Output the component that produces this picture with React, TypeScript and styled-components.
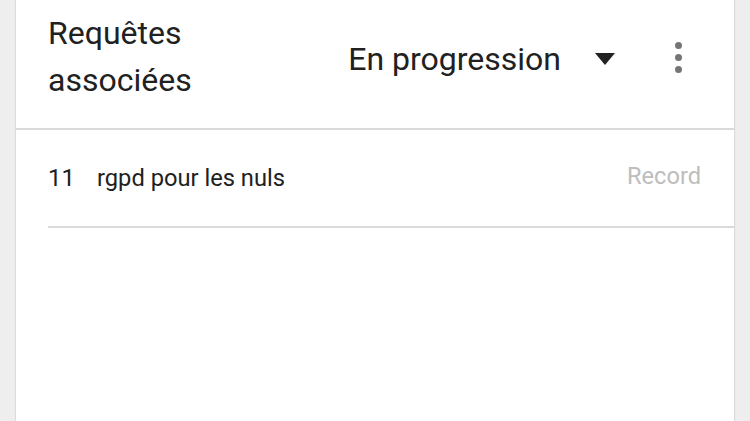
import styled, { createGlobalStyle } from "styled-components";

const GlobalStyle = createGlobalStyle`
    html, body {
        margin: 0;
        padding: 0;
        height: 100%;
        background: #eeeeee;
        font-family: Roboto, "Noto Sans", Arial, sans-serif;
        color: #212121;
        overflow: hidden;
    }
    #root {
        height: 100%;
    }
`;

const Page = styled.div`
    height: 100%;
    padding: 0 16px;
    box-sizing: border-box;
`;

const Card = styled.section`
    background: #ffffff;
    height: 100%;
    box-shadow: 0 0 2px rgba(0, 0, 0, 0.18), 0 0 1px rgba(0, 0, 0, 0.12);
`;

const Header = styled.header`
    display: flex;
    align-items: flex-start;
    justify-content: space-between;
    height: 128px;
    padding: 0 44px 0 32px;
    border-bottom: 2px solid #dadada;
`;

const Title = styled.h2`
    margin: 10px 0 0;
    font-size: 32px;
    font-weight: 400;
    line-height: 47px;
`;

const Controls = styled.div`
    display: flex;
    align-items: center;
    margin-top: 36px;
`;

const Select = styled.button`
    display: flex;
    align-items: center;
    gap: 34px;
    padding: 0;
    border: none;
    background: none;
    font: inherit;
    font-size: 32px;
    line-height: 47px;
    color: #212121;
    cursor: pointer;
`;

const Caret = styled.span`
    width: 0;
    height: 0;
    border-left: 10px solid transparent;
    border-right: 10px solid transparent;
    border-top: 12px solid #212121;
    margin-top: -2px;
`;

const MenuButton = styled.button`
    display: flex;
    flex-direction: column;
    align-items: center;
    gap: 5px;
    width: 24px;
    margin-left: 51px;
    margin-top: -4px;
    padding: 0;
    border: none;
    background: none;
    cursor: pointer;
`;

const Dot = styled.span`
    width: 7px;
    height: 7px;
    border-radius: 50%;
    background: #757575;
`;

const List = styled.ul`
    list-style: none;
    margin: 0;
    padding: 0;
`;

const Row = styled.li`
    display: flex;
    align-items: center;
    height: 96px;
    margin-left: 32px;
    padding-right: 33px;
    border-bottom: 2px solid #dadada;
`;

const Rank = styled.span`
    width: 49px;
    font-size: 24px;
    line-height: 28px;
`;

const Query = styled.span`
    flex: 1;
    font-size: 23.7px;
    line-height: 28px;
`;

const Value = styled.span`
    font-size: 23.6px;
    line-height: 28px;
    margin-bottom: 4px;
    color: #bdbdbd;
`;

const rows = [{ rank: 11, query: "rgpd pour les nuls", value: "Record" }];

export default function App() {
    return (
        <>
            <GlobalStyle />
            <Page>
                <Card>
                    <Header>
                        <Title>
                            Requêtes
                            <br />
                            associées
                        </Title>
                        <Controls>
                            <Select>
                                En progression
                                <Caret />
                            </Select>
                            <MenuButton aria-label="Plus d'options">
                                <Dot />
                                <Dot />
                                <Dot />
                            </MenuButton>
                        </Controls>
                    </Header>
                    <List>
                        {rows.map((r) => (
                            <Row key={r.rank}>
                                <Rank>{r.rank}</Rank>
                                <Query>{r.query}</Query>
                                <Value>{r.value}</Value>
                            </Row>
                        ))}
                    </List>
                </Card>
            </Page>
        </>
    );
}
